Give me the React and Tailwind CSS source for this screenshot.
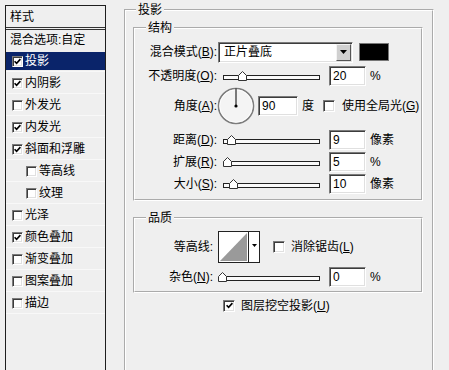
import React from "react";

const sunken =
  "bg-white border border-t-[#7b7b7b] border-l-[#7b7b7b] border-r-white border-b-white shadow-[inset_1px_1px_0_#3c3c3c,inset_-1px_-1px_0_#e0e0e0]";

const styleItems = [
  { text: "投影", checked: true, selected: true },
  { text: "内阴影", checked: true },
  { text: "外发光", checked: false },
  { text: "内发光", checked: true },
  { text: "斜面和浮雕", checked: true },
  { text: "等高线", checked: false, indent: true },
  { text: "纹理", checked: false, indent: true },
  { text: "光泽", checked: false },
  { text: "颜色叠加", checked: true },
  { text: "渐变叠加", checked: false },
  { text: "图案叠加", checked: false },
  { text: "描边", checked: false },
];

const CheckBox = ({ checked, small }) => (
  <span
    className={`${small ? "w-[11px] h-[11px]" : "w-[12px] h-[12px]"} shrink-0 inline-flex items-center justify-center ${sunken}`}
  >
    {checked && (
      <svg width="7" height="7" viewBox="0 0 7 7">
        <path d="M0.6 3.2 L2.6 5.3 L6.4 1.1" fill="none" stroke="#000" strokeWidth="1.6" />
      </svg>
    )}
  </span>
);

const Label = ({ name, hot, className }) => (
  <span className={`${className} shrink-0 text-right whitespace-nowrap`}>
    {name}
    {hot && (
      <>
        (<u className="underline-offset-1">{hot}</u>)
      </>
    )}
    :
  </span>
);

const Slider = ({ thumb }) => (
  <div className="relative w-[97px] h-[10px] shrink-0 flex items-end">
    <div className="w-full h-[5px] mb-[1px] border border-[#222] bg-[#fafafa]" />
    <svg className="absolute top-0" style={{ left: thumb }} width="9" height="10" viewBox="0 0 9 10">
      <path d="M4.5 0.5 L8.5 4.5 L8.5 9.5 L0.5 9.5 L0.5 4.5 Z" fill="#fff" stroke="#333" />
    </svg>
  </div>
);

const NumBox = ({ value, wide }) => (
  <div className={`${wide ? "w-[40px]" : "w-[37px]"} h-[20px] shrink-0 pl-[3px] leading-[18px] ${sunken}`}>
    {value}
  </div>
);

const SliderRow = ({ name, hot, thumb, value, unit, className }) => (
  <div className={`flex items-center h-[22px] ${className || ""}`}>
    <Label name={name} hot={hot} className="w-[82px]" />
    <div className="ml-[6px]">
      <Slider thumb={thumb} />
    </div>
    <div className="ml-[9px]">
      <NumBox value={value} />
    </div>
    <span className="ml-[4px]">{unit}</span>
  </div>
);

const LeftPanel = () => (
  <div className="ml-[5px] mt-[5px] w-[101px] h-[400px] shrink-0 border-t border-x border-[#1e1e1e]">
    <div className="h-[24px] border-b-[3px] border-double border-[#333] pl-[4px] flex items-center">样式</div>
    <div className="h-[20px] pl-[4px] flex items-center whitespace-nowrap">混合选项:自定</div>
    {styleItems.map((item) => (
      <div key={item.text} className="h-[22px] py-[2px] border-b border-[#f8f8f8]">
        <div
          className={`h-[18px] flex items-center ${item.indent ? "pl-[20px]" : "pl-[6px]"} ${
            item.selected ? "bg-[#0a246a] text-white" : ""
          }`}
        >
          <CheckBox checked={item.checked} small />
          <span className="ml-[2px] whitespace-nowrap">{item.text}</span>
        </div>
      </div>
    ))}
  </div>
);

const Dial = () => (
  <svg width="38" height="38" viewBox="0 0 38 38" className="shrink-0">
    <circle cx="19" cy="19" r="17.5" fill="#f4f4f4" stroke="#7d7d7d" strokeWidth="1.6" />
    <circle cx="19" cy="19" r="16.3" fill="none" stroke="#ffffff" strokeWidth="0.8" />
    <line x1="19" y1="19" x2="19" y2="1.5" stroke="#000" strokeWidth="1" />
    <circle cx="19" cy="19" r="1.6" fill="#000" />
  </svg>
);

const ContourBox = () => (
  <div className="w-[42px] h-[32px] shrink-0 flex border border-[#222] bg-white">
    <svg width="29" height="30" viewBox="0 0 29 30" className="shrink-0">
      <rect x="0" y="0" width="29" height="30" fill="#fff" />
      <polygon points="1,29 28,1 28,29" fill="#9a9a9a" />
    </svg>
    <div className="flex-1 border-l border-[#222] flex justify-center pt-[12px]">
      <svg width="5" height="3" viewBox="0 0 5 3">
        <polygon points="0,0 5,0 2.5,3" fill="#000" />
      </svg>
    </div>
  </div>
);

const group = "border-2 [border-style:groove] border-white min-w-0";

export default function App() {
  return (
    <div className="w-[449px] h-[370px] overflow-hidden bg-[#efefef] text-black text-[12px] leading-[16px] font-['Liberation_Sans','Noto_Sans_CJK_SC',sans-serif] flex items-start">
      <LeftPanel />

      <fieldset className={`ml-[18px] mt-[2px] w-[310px] h-[420px] shrink-0 px-[7px] ${group}`}>
        <legend className="ml-[3px] px-[2px]">投影</legend>

        <fieldset className={`mt-[2px] w-[290px] pt-[5px] pb-[4px] ${group}`}>
          <legend className="ml-[11px] px-[2px]">结构</legend>

          <div className="flex items-center h-[22px]">
            <Label name="混合模式" hot="B" className="w-[82px]" />
            <div className={`ml-[1px] w-[135px] h-[21px] flex items-center justify-between ${sunken}`}>
              <span className="pl-[5px]">正片叠底</span>
              <div className="w-[15px] h-[17px] mr-[1px] bg-[#d0d0d0] border border-t-[#f4f4f4] border-l-[#f4f4f4] border-r-[#555] border-b-[#555] flex items-center justify-center">
                <svg width="7" height="4" viewBox="0 0 7 4">
                  <polygon points="0,0 7,0 3.5,4" fill="#000" />
                </svg>
              </div>
            </div>
            <div className="ml-[6px] w-[30px] h-[18px] bg-black border border-[#777]" />
          </div>

          <SliderRow name="不透明度" hot="O" thumb={15} value="20" unit="%" className="mt-[2px]" />

          <div className="flex items-center h-[38px]">
            <Label name="角度" hot="A" className="w-[82px]" />
            <Dial />
            <div className="ml-[3px]">
              <NumBox value="90" wide />
            </div>
            <span className="ml-[4px]">度</span>
            <div className="ml-[9px] flex items-center">
              <CheckBox checked={false} />
            </div>
            <span className="ml-[7px] whitespace-nowrap">
              使用全局光(<u className="underline-offset-1">G</u>)
            </span>
          </div>

          <SliderRow name="距离" hot="D" thumb={4} value="9" unit="像素" className="mt-[4px]" />
          <SliderRow name="扩展" hot="R" thumb={0} value="5" unit="%" />
          <SliderRow name="大小" hot="S" thumb={6} value="10" unit="像素" />
        </fieldset>

        <fieldset className={`mt-[9px] w-[290px] pt-[5px] pb-[3px] ${group}`}>
          <legend className="ml-[11px] px-[2px]">品质</legend>

          <div className="flex items-center h-[32px]">
            <Label name="等高线" className="w-[78px]" />
            <div className="ml-[5px]">
              <ContourBox />
            </div>
            <div className="ml-[13px] flex items-center">
              <CheckBox checked={false} />
            </div>
            <span className="ml-[6px] whitespace-nowrap">
              消除锯齿(<u className="underline-offset-1">L</u>)
            </span>
          </div>

          <div className="flex items-center h-[22px] mt-[3px]">
            <Label name="杂色" hot="N" className="w-[78px]" />
            <div className="ml-[10px]">
              <Slider thumb={-5} />
            </div>
            <div className="ml-[9px]">
              <NumBox value="0" />
            </div>
            <span className="ml-[4px]">%</span>
          </div>
        </fieldset>

        <div className="mt-[6px] ml-[90px] flex items-center h-[13px]">
          <CheckBox checked />
          <span className="ml-[6px] whitespace-nowrap">
            图层挖空投影(<u className="underline-offset-1">U</u>)
          </span>
        </div>
      </fieldset>
    </div>
  );
}
